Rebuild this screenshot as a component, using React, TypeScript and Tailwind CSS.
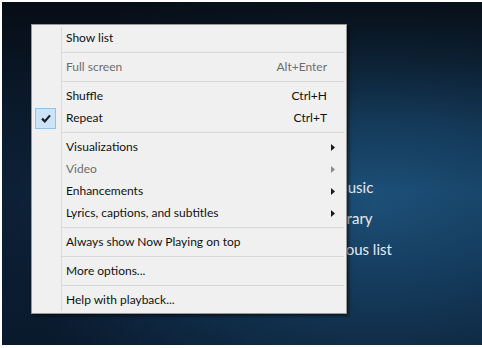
import React from 'react';

type Item =
  | { kind: 'sep' }
  | { kind: 'item'; label: string; shortcut?: string; disabled?: boolean; checked?: boolean; submenu?: boolean };

const items: Item[] = [
  { kind: 'item', label: 'Show list' },
  { kind: 'sep' },
  { kind: 'item', label: 'Full screen', shortcut: 'Alt+Enter', disabled: true },
  { kind: 'sep' },
  { kind: 'item', label: 'Shuffle', shortcut: 'Ctrl+H' },
  { kind: 'item', label: 'Repeat', shortcut: 'Ctrl+T', checked: true },
  { kind: 'sep' },
  { kind: 'item', label: 'Visualizations', submenu: true },
  { kind: 'item', label: 'Video', submenu: true, disabled: true },
  { kind: 'item', label: 'Enhancements', submenu: true },
  { kind: 'item', label: 'Lyrics, captions, and subtitles', submenu: true },
  { kind: 'sep' },
  { kind: 'item', label: 'Always show Now Playing on top' },
  { kind: 'sep' },
  { kind: 'item', label: 'More options...' },
  { kind: 'sep' },
  { kind: 'item', label: 'Help with playback...' },
];

const CheckMark = () => (
  <svg width="10" height="9" viewBox="0 0 10 9">
    <path d="M1 4.6 L3.8 7.4 L9 1.4" fill="none" stroke="#1e1e1e" strokeWidth="2.2" strokeLinejoin="miter" />
  </svg>
);

const Arrow = ({ disabled }: { disabled?: boolean }) => (
  <svg width="4" height="7" viewBox="0 0 4 7">
    <polygon points="0,0 4,3.5 0,7" fill={disabled ? '#8a8a8a' : '#1a1a1a'} />
  </svg>
);

const MenuRow = ({ item }: { item: Extract<Item, { kind: 'item' }> }) => (
  <div className={`flex h-[22px] items-center ${item.disabled ? 'text-[#6d6d6d]' : 'text-[#111]'}`}>
    <div className="flex h-full w-[28px] shrink-0 items-center border-r border-[#dadada]">
      {item.checked && (
        <div className="ml-[1px] flex h-[21px] w-[21px] items-center justify-center border border-[#8fc3e8] bg-[#cce4f7]">
          <CheckMark />
        </div>
      )}
    </div>
    <div className="flex-1 pl-[4px]">{item.label}</div>
    {item.shortcut && <div>{item.shortcut}</div>}
    <div className="flex w-[17px] shrink-0 items-center pl-[4px]">{item.submenu && <Arrow disabled={item.disabled} />}</div>
  </div>
);

const Separator = () => (
  <div className="flex h-[7px]">
    <div className="w-[28px] shrink-0 border-r border-[#dadada]" />
    <div className="flex flex-1 items-center">
      <div className="h-[1px] w-full bg-[#d7d7d7]" />
    </div>
  </div>
);

export default function App() {
  return (
    <div className="h-[348px] w-[482px] bg-white pl-[2px] pt-[2px] pb-[3px]" style={{ fontFamily: '"Segoe UI", Lato, "Noto Sans", sans-serif' }}>
      <div className="relative h-full w-full overflow-hidden bg-[linear-gradient(to_bottom,rgba(6,10,16,0.85)_0%,rgba(6,10,16,0.2)_35%,rgba(6,10,16,0)_55%,rgba(6,14,28,0.35)_100%),radial-gradient(ellipse_75%_85%_at_78%_60%,#1d5079_0%,#174469_35%,#11314f_70%,#0c2036_100%)]">
        <div className="flex flex-col gap-[12px] pl-[284px] pt-[176px] text-[15px] leading-[19px] text-[#e3ebf2]">
          <div>Play all music</div>
          <div>Go to Library</div>
          <div className="-ml-[4px]">Play previous list</div>
        </div>

        <div className="absolute left-[29px] top-[22px] w-[316px] border border-[#979797] bg-[#f0f0f0] p-[2px] text-[12px] shadow-[2px_2px_3px_rgba(0,0,0,0.55)]">
          {items.map((item, i) => (item.kind === 'sep' ? <Separator key={i} /> : <MenuRow key={i} item={item} />))}
        </div>
      </div>
    </div>
  );
}
